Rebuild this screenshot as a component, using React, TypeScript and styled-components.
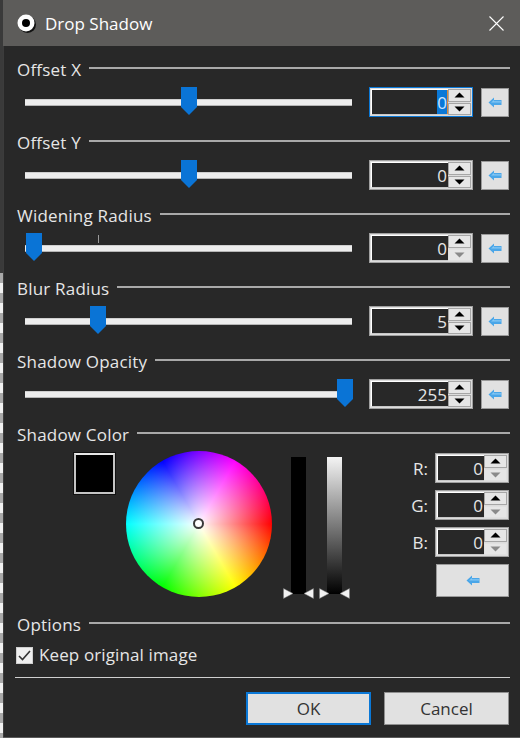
import React from "react";
import styled, { createGlobalStyle } from "styled-components";

const Global = createGlobalStyle`
  html, body { margin: 0; padding: 0; background: #2a2a2a; }
  * { box-sizing: border-box; }
  #root { width: 520px; height: 738px; overflow: hidden; }
`;

const Screen = styled.div`
  width: 520px;
  height: 738px;
  display: flex;
  font-family: "Open Sans", "Noto Sans", sans-serif;
  font-size: 17px;
  color: #e6e6e6;
  overflow: hidden;
`;

const Backdrop = styled.div`
  width: 3px;
  flex: none;
  display: flex;
  flex-direction: column;
`;
const BackdropDark = styled.div`
  height: 273px;
  background: #3a3a3a;
`;
const BackdropChecker = styled.div`
  flex: 1;
  background: repeating-linear-gradient(to bottom, #a8a8a8 0 10px, #f0f0f0 10px 20px);
`;

const Win = styled.div`
  flex: 1;
  display: flex;
  flex-direction: column;
  min-width: 0;
  border-bottom: 1px solid #5a5a5a;
`;

const TitleBar = styled.div`
  height: 46px;
  flex: none;
  background: #5d5c5a;
  display: flex;
  align-items: center;
  padding: 0 16px 0 13px;
  color: #fff;
`;
const TitleIcon = styled.svg`
  width: 21px;
  height: 21px;
  flex: none;
  margin-right: 8px;
`;
const TitleText = styled.span`
  flex: 1;
  font-size: 17px;
`;
const CloseIcon = styled.svg`
  width: 15px;
  height: 15px;
  flex: none;
`;

const Body = styled.div`
  flex: 1;
  background: #282828;
  border-left: 1px solid #3c3c3c;
  padding: 13px 10px 0 13px;
  display: flex;
  flex-direction: column;
`;

const Heading = styled.div`
  display: flex;
  align-items: center;
  height: 22px;
  padding-bottom: 2px;
  gap: 8px;
  white-space: nowrap;
  letter-spacing: 0.2px;
`;
const HeadingRule = styled.div`
  flex: 1;
  height: 2px;
  margin-top: -2px;
  background: #a9a9a9;
`;

const Section = styled.section`
  height: 73px;
  flex: none;
`;
const Row = styled.div`
  display: flex;
  align-items: center;
  height: 30px;
  margin-top: 6px;
  padding-left: 8px;
`;

const Slider = styled.div`
  position: relative;
  width: 327px;
  height: 30px;
  flex: none;
  display: flex;
  align-items: center;
  margin-right: 17px;
`;
const Track = styled.div`
  width: 100%;
  height: 7px;
  background: #ededed;
  border-top: 1px solid #cfcfcf;
  border-bottom: 1px solid #b5b5b5;
`;
const Thumb = styled.svg`
  position: absolute;
  top: 0;
  width: 16px;
  height: 28px;
`;
const Tick = styled.div`
  position: absolute;
  left: 73px;
  top: 2px;
  width: 1px;
  height: 8px;
  background: #9a9a9a;
`;

const Spin = styled.div<{ $focus?: boolean; $w?: number }>`
  width: ${(p) => p.$w ?? 104}px;
  height: 30px;
  flex: none;
  display: flex;
  background: #dcdcdc;
  border: 1px solid ${(p) => (p.$focus ? "#0a78d7" : "#a0a0a0")};
  padding: 1px;
`;
const SpinField = styled.div`
  flex: 1;
  background: #282828;
  border: 1px solid #fff;
  border-right: none;
  border-bottom-color: #c8c8c8;
  display: flex;
  justify-content: flex-end;
  align-items: center;
  padding-right: 1px;
  font-size: 17px;
  min-width: 0;
  color: #e6e6e6;
`;
const Selected = styled.span`
  background: #0a78d7;
  color: #cfe6ff;
  height: 100%;
  display: flex;
  align-items: center;
  border-right: 1px solid #d98a3c;
  margin-right: -1px;
`;
const SpinBtns = styled.div`
  width: 23px;
  flex: none;
  display: flex;
  flex-direction: column;
  gap: 1px;
`;
const SpinBtn = styled.div<{ $off?: boolean }>`
  flex: 1;
  background: #e6e6e6;
  border: 1px solid ${(p) => (p.$off ? "#e0e0e0" : "#a6a6a6")};
  display: flex;
  align-items: center;
  justify-content: center;
`;
const Tri = styled.svg`
  width: 11px;
  height: 6px;
`;

const ArrowBtn = styled.div<{ $wide?: boolean }>`
  width: ${(p) => (p.$wide ? 73 : 28)}px;
  height: ${(p) => (p.$wide ? 33 : 29)}px;
  flex: none;
  margin-left: ${(p) => (p.$wide ? 0 : 8)}px;
  background: #e1e1e1;
  border: 1px solid #9a9a9a;
  display: flex;
  align-items: center;
  justify-content: center;
`;
const ArrowIcon = styled.svg`
  width: 14px;
  height: 11px;
`;

const ColorArea = styled.div`
  display: flex;
  height: 163px;
  margin-top: 5px;
`;
const Swatch = styled.div`
  width: 41px;
  height: 41px;
  flex: none;
  margin: 2px 0 0 57px;
  background: #000;
  border: 2px solid #c4c4c4;
  border-top-color: #e8e8e8;
  outline: 1px solid #111;
`;
const Wheel = styled.div`
  position: relative;
  width: 146px;
  height: 146px;
  flex: none;
  margin-left: 11px;
  border-radius: 50%;
  background:
    radial-gradient(circle closest-side, #fff 0%, rgba(255, 255, 255, 0.75) 25%, rgba(255, 255, 255, 0) 100%),
    conic-gradient(from 90deg, #f00, #ff0, #0f0, #0ff, #00f, #f0f, #f00);
`;
const WheelHandle = styled.div`
  position: absolute;
  left: 67px;
  top: 67px;
  width: 11px;
  height: 11px;
  border-radius: 50%;
  background: #fff;
  border: 2px solid #3a3a3a;
`;
const Bars = styled.div`
  display: flex;
  gap: 21px;
  margin-left: 19px;
  margin-top: 6px;
  flex: none;
`;
const BarWrap = styled.div`
  position: relative;
  width: 15px;
  height: 137px;
`;
const Bar = styled.div<{ $grad?: boolean }>`
  width: 15px;
  height: 137px;
  background: ${(p) => (p.$grad ? "linear-gradient(to bottom, #f4f4f4, #000)" : "#000")};
`;
const BarMarks = styled.svg`
  position: absolute;
  left: -8px;
  bottom: -5px;
  width: 31px;
  height: 11px;
`;
const RgbCol = styled.div`
  margin-left: auto;
  margin-right: 1px;
  margin-top: 2px;
  width: 104px;
  display: flex;
  flex-direction: column;
  gap: 7px;
`;
const RgbRow = styled.div`
  display: flex;
  align-items: center;
  justify-content: flex-end;
  gap: 7px;
  height: 30px;
`;
const RgbBtnRow = styled.div`
  display: flex;
  justify-content: flex-end;
`;

const CheckRow = styled.label`
  display: flex;
  align-items: center;
  gap: 6px;
  height: 26px;
  margin: 6px 0 0 -1px;
`;
const CheckBox = styled.div`
  width: 17px;
  height: 17px;
  background: #efefef;
  border: 1px solid #cfcfcf;
  display: flex;
  align-items: center;
  justify-content: center;
`;
const CheckLabel = styled.span`
  margin-bottom: 2px;
  letter-spacing: 0.12px;
`;
const Divider = styled.div`
  height: 1px;
  background: #cfcfcf;
  margin: 9px 0 0 -2px;
`;
const Footer = styled.div`
  display: flex;
  justify-content: flex-end;
  gap: 13px;
  margin: 14px 1px 0 0;
`;
const DlgBtn = styled.div<{ $primary?: boolean }>`
  width: 125px;
  height: 33px;
  padding-bottom: 1px;
  background: #e1e1e1;
  border: ${(p) => (p.$primary ? "2px solid #0a78d7" : "1px solid #8f8f8f")};
  color: #333;
  display: flex;
  align-items: center;
  justify-content: center;
`;

const up = "M5.5 0.5 L10.5 5.5 L0.5 5.5 Z";
const down = "M0.5 0.5 L10.5 0.5 L5.5 5.5 Z";

const Arrow = () => (
  <ArrowIcon viewBox="0 0 14 11">
    <path d="M0.5 5.5 L6 0.5 V3 H13.5 V8 H6 V10.5 Z" fill="#4aa6e8" />
    <path d="M3 5.5 L6 3 V4.2 H13 V5.5 Z" fill="#86c8f4" />
  </ArrowIcon>
);

const SpinBox = ({
  value,
  focus,
  w,
  downOff,
}: {
  value: string;
  focus?: boolean;
  w?: number;
  downOff?: boolean;
}) => (
  <Spin $focus={focus} $w={w}>
    <SpinField>{focus ? <Selected>{value}</Selected> : value}</SpinField>
    <SpinBtns>
      <SpinBtn>
        <Tri viewBox="0 0 11 6"><path d={up} fill="#000" /></Tri>
      </SpinBtn>
      <SpinBtn $off={downOff}>
        <Tri viewBox="0 0 11 6"><path d={down} fill={downOff ? "#8a8a8a" : "#000"} /></Tri>
      </SpinBtn>
    </SpinBtns>
  </Spin>
);

const sliders = [
  { label: "Offset X", value: "0", pos: 156, focus: true },
  { label: "Offset Y", value: "0", pos: 156 },
  { label: "Widening Radius", value: "0", pos: 1, tick: true, downOff: true },
  { label: "Blur Radius", value: "5", pos: 65 },
  { label: "Shadow Opacity", value: "255", pos: 312 },
];

const Marks = () => (
  <BarMarks viewBox="0 0 31 11">
    <path d="M0.5 0.5 L10 5.5 L0.5 10.5 Z M30.5 0.5 L21 5.5 L30.5 10.5 Z" fill="#f2f2f2" stroke="#777" strokeWidth="0.5" />
  </BarMarks>
);

export default function App() {
  return (
    <Screen>
      <Global />
      <Backdrop>
        <BackdropDark />
        <BackdropChecker />
      </Backdrop>
      <Win>
        <TitleBar>
          <TitleIcon viewBox="0 0 21 21">
            <circle cx="11.5" cy="11.5" r="8.5" fill="#111" />
            <circle cx="10" cy="10" r="8.5" fill="#fff" />
            <circle cx="10" cy="10" r="4" fill="#000" />
          </TitleIcon>
          <TitleText>Drop Shadow</TitleText>
          <CloseIcon viewBox="0 0 15 15">
            <path d="M0.5 0.5 L14.5 14.5 M14.5 0.5 L0.5 14.5" stroke="#fff" strokeWidth="1.1" fill="none" />
          </CloseIcon>
        </TitleBar>
        <Body>
          {sliders.map((s) => (
            <Section key={s.label}>
              <Heading>
                {s.label}
                <HeadingRule />
              </Heading>
              <Row>
                <Slider>
                  <Track />
                  {s.tick && <Tick />}
                  <Thumb viewBox="0 0 16 28" style={{ left: s.pos }}>
                    <path d="M0 0 H16 V20 L8 28 L0 20 Z" fill="#0a74d6" />
                  </Thumb>
                </Slider>
                <SpinBox value={s.value} focus={s.focus} downOff={s.downOff} />
                <ArrowBtn><Arrow /></ArrowBtn>
              </Row>
            </Section>
          ))}
          <Heading>
            Shadow Color
            <HeadingRule />
          </Heading>
          <ColorArea>
            <Swatch />
            <Wheel><WheelHandle /></Wheel>
            <Bars>
              <BarWrap>
                <Bar />
                <Marks />
              </BarWrap>
              <BarWrap>
                <Bar $grad />
                <Marks />
              </BarWrap>
            </Bars>
            <RgbCol>
              {["R:", "G:", "B:"].map((l) => (
                <RgbRow key={l}>
                  {l}
                  <SpinBox value="0" w={74} downOff />
                </RgbRow>
              ))}
              <RgbBtnRow>
                <ArrowBtn $wide><Arrow /></ArrowBtn>
              </RgbBtnRow>
            </RgbCol>
          </ColorArea>
          <Heading>
            Options
            <HeadingRule />
          </Heading>
          <CheckRow>
            <CheckBox>
              <svg width="13" height="11" viewBox="0 0 13 11">
                <path d="M1 6 L4.5 9.5 L12 1" stroke="#333" strokeWidth="1.6" fill="none" />
              </svg>
            </CheckBox>
            <CheckLabel>Keep original image</CheckLabel>
          </CheckRow>
          <Divider />
          <Footer>
            <DlgBtn $primary>OK</DlgBtn>
            <DlgBtn>Cancel</DlgBtn>
          </Footer>
        </Body>
      </Win>
    </Screen>
  );
}
